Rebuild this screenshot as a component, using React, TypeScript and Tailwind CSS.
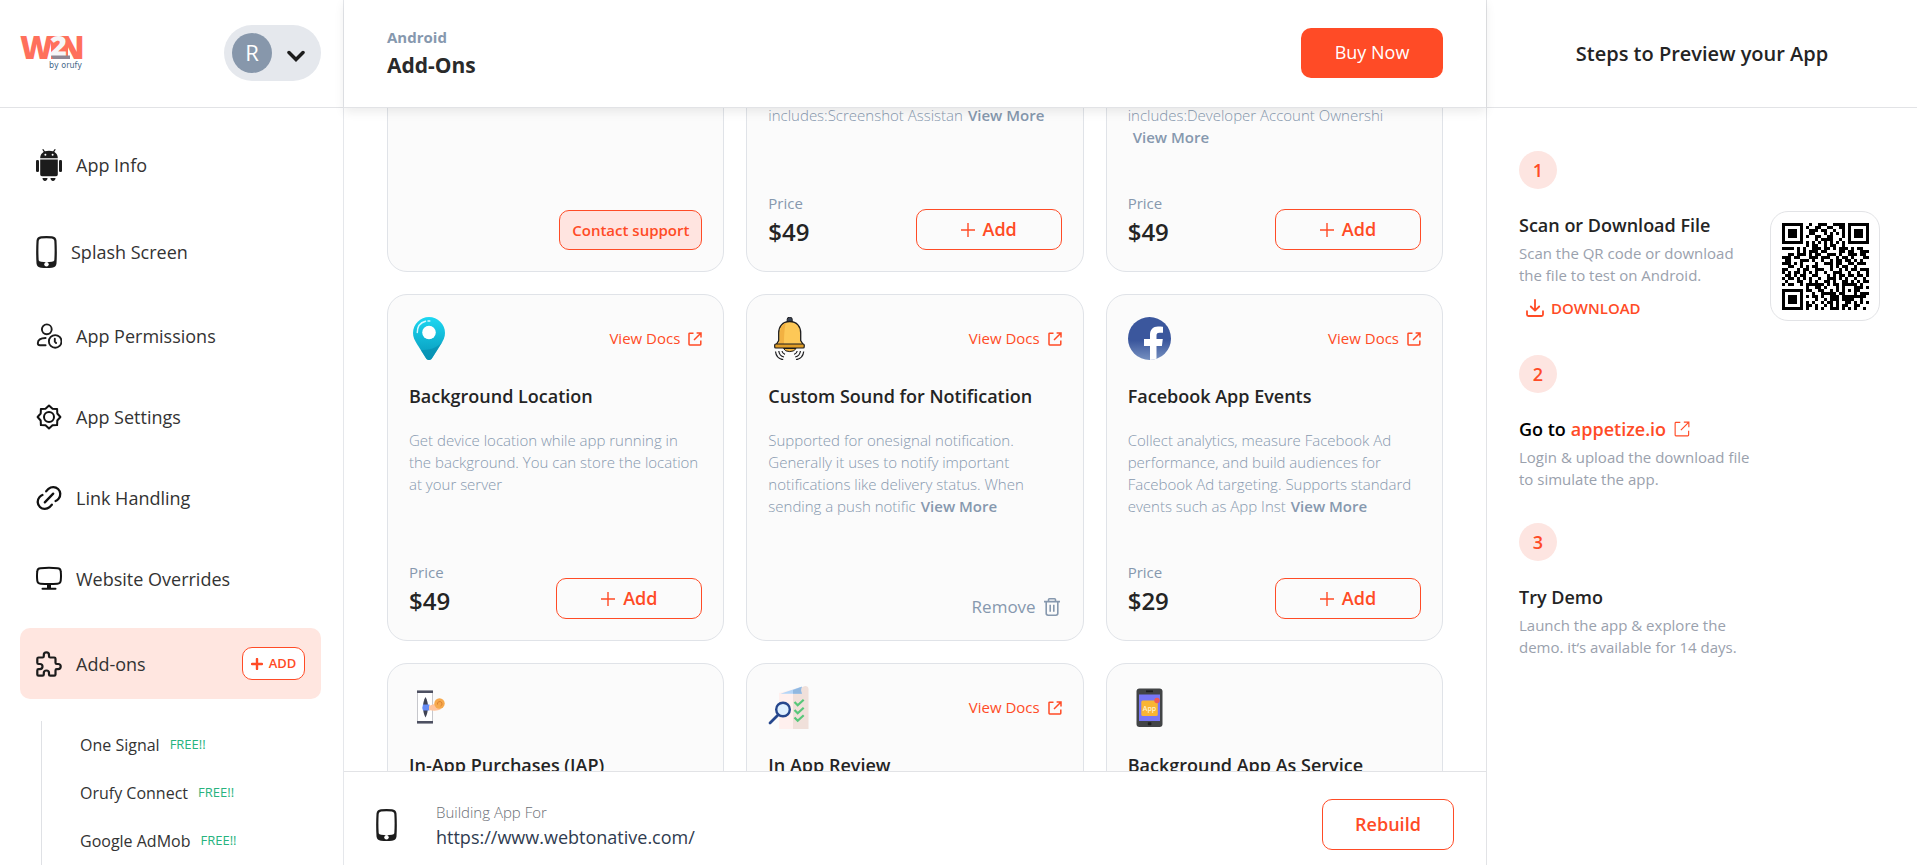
import { useLayoutEffect, useRef } from 'react';
import type { ReactNode } from 'react';

type NavItem = { label: string; icon: ReactNode };

type AddOn = {
  name: string;
  icon: ReactNode;
  docs?: boolean;
  text: string;
  more?: boolean;
  action: 'add' | 'remove' | 'contact';
  price?: string;
};

const AndroidIcon = () => (
  <svg width="26" height="32" viewBox="0 0 26 32" fill="#1c1c1c" aria-hidden="true">
    <path d="M4.2 9.2C4.2 5 7 1.8 13 1.8s8.800 3.200 8.800 7.400z" />
    <path d="M7 .7l1.800 2.600M19 .7l-1.800 2.600" stroke="#1c1c1c" strokeWidth="1.200" strokeLinecap="round" />
    <circle cx="9.400" cy="5.800" r="1" fill="#fff" />
    <circle cx="16.600" cy="5.800" r="1" fill="#fff" />
    <path d="M4.200 10.600h17.600v14.900a1.700 1.700 0 0 1-1.700 1.700H5.900a1.700 1.700 0 0 1-1.700-1.700z" />
    <rect x="0" y="11" width="3" height="12" rx="1.300" />
    <rect x="23" y="11" width="3" height="12" rx="1.300" />
    <path d="M6.500 29h5c0 1.600-1 2.900-2.500 2.900S6.500 30.600 6.500 29zM14.500 29h5c0 1.600-1 2.900-2.500 2.900s-2.500-1.300-2.500-2.900z" />
  </svg>
);

const PhoneIcon = () => (
  <svg width="21" height="32" viewBox="0 0 21 32" aria-hidden="true">
    <path
      fillRule="evenodd"
      fill="#1c1c1c"
      d="M5 .3Q10.500-.2 16 .3 20 .6 20.500 4.500 21.200 16 20.500 27.500 20 31.300 16 31.700 10.500 32.200 5 31.700 1 31.300.5 27.500-.2 16 .5 4.500 1 .6 5 .3zM5.200 2.500Q10.500 2 15.800 2.500 18 2.700 18.300 4.700 18.900 14 18.300 24.300 18 25.600 15.800 25.800 10.500 26.200 5.200 25.800 3 25.600 2.700 24.300 2.100 14 2.700 4.700 3 2.700 5.200 2.500z"
    />
    <circle cx="10.500" cy="28.300" r="2.200" fill="#fff" />
  </svg>
);

const UserClockIcon = () => (
  <svg width="26" height="26" viewBox="0 0 26 26" fill="none" stroke="#1c1c1c" strokeWidth="1.900" strokeLinecap="round" strokeLinejoin="round" aria-hidden="true">
    <circle cx="10.800" cy="6.300" r="4.900" />
    <path d="M9.600 15C4.500 15 1.800 17 1.800 20.200c0 1.500.8 2 2.200 2h5.600" />
    <circle cx="19.200" cy="18.400" r="6.300" />
    <path d="M18.800 15.800v2.900l1.300 1.300" />
  </svg>
);

const GearIcon = () => (
  <svg width="26" height="26" viewBox="0 0 26 26" fill="none" stroke="#111" strokeWidth="2" strokeLinejoin="round" aria-hidden="true">
    <path d="M13 1.600 16.500 4.700 21.100 4.900 21.300 9.500 24.400 13 21.300 16.500 21.100 21.100 16.500 21.300 13 24.400 9.500 21.300 4.900 21.100 4.700 16.500 1.600 13 4.700 9.500 4.900 4.900 9.500 4.700z" />
    <circle cx="13" cy="13" r="5" />
  </svg>
);

const LinkIcon = () => (
  <svg width="26" height="26" viewBox="0 0 26 26" fill="none" stroke="#111" strokeWidth="2.300" strokeLinecap="round" aria-hidden="true">
    <path d="M10.200 6.300 12.500 3.800a7.100 7.100 0 0 1 10.200 9.800c-1 1.200-1.800 1.900-3.100 2.400" />
    <path d="M15.800 19.700l-2.300 2.500a7.100 7.100 0 0 1-10.200-9.800c1-1.200 1.800-1.900 3.100-2.400" />
    <path d="M8.800 17.400l8.400-8.800" />
  </svg>
);

const MonitorIcon = () => (
  <svg width="26" height="26" viewBox="0 0 26 26" fill="none" stroke="#111" strokeWidth="2" strokeLinecap="round" aria-hidden="true">
    <path d="M4.500 2.200Q13 1.500 21.500 2.200q3 .2 3.200 3Q25.300 10 24.700 14.800q-.2 2.700-3.200 2.900Q13 18.300 4.500 17.700q-3-.2-3.200-2.900Q.7 10 1.300 5.200q.2-2.800 3.200-3z" />
    <path d="M13 18v4" strokeWidth="4" strokeLinecap="butt" />
    <path d="M6.500 22.700h13" />
  </svg>
);

const PuzzleIcon = () => (
  <svg width="26" height="26" viewBox="2 2 20 20" fill="none" stroke="#1c1c1c" strokeWidth="1.700" strokeLinecap="round" strokeLinejoin="round" aria-hidden="true">
    <path d="M4 7h3a1 1 0 0 0 1-1v-1a2 2 0 0 1 4 0v1a1 1 0 0 0 1 1h3a1 1 0 0 1 1 1v3a1 1 0 0 0 1 1h1a2 2 0 0 1 0 4h-1a1 1 0 0 0-1 1v3a1 1 0 0 1-1 1h-3a1 1 0 0 1-1-1v-1a2 2 0 0 0-4 0v1a1 1 0 0 1-1 1h-3a1 1 0 0 1-1-1v-3a1 1 0 0 1 1-1h1a2 2 0 0 0 0-4h-1a1 1 0 0 1-1-1v-3a1 1 0 0 1 1-1" />
  </svg>
);

const ExternalIcon = ({ size = 14, thin = false }: { size?: number; thin?: boolean }) => (
  <svg width={size} height={size} viewBox="0 0 14 14" fill="none" stroke="#ff4b26" strokeWidth={thin ? 1 : 1.500} aria-hidden="true">
    <path d="M5.500 1.200H1.700a.7.7 0 0 0-.7.700v10.400c0 .4.300.7.700.7h10.400c.4 0 .7-.3.700-.7V8.500" />
    <path d="M8.600 1H13v4.400M13 1 6 8" />
  </svg>
);

const PlusIcon = () => (
  <svg width="14" height="14" viewBox="0 0 14 14" stroke="#ff4b26" strokeWidth="1.400" aria-hidden="true">
    <path d="M7 0v14M0 7h14" />
  </svg>
);

const TrashIcon = () => (
  <svg width="16" height="18" viewBox="0 0 16 18" fill="none" stroke="#8698ae" strokeWidth="1.600" aria-hidden="true">
    <path d="M2.200 3.800v11.500c0 1.100.8 1.900 1.900 1.900h7.800c1.100 0 1.900-.8 1.900-1.900V3.800" />
    <path d="M0 3.600h16M4.500 3.400V1.800c0-.6.400-1 1-1h5c.6 0 1 .4 1 1v1.600M6.200 6.800v7M9.800 6.800v7" />
  </svg>
);

const PinArt = () => (
  <svg width="43" height="43" viewBox="0 0 43 43" aria-hidden="true">
    <defs>
      <linearGradient id="pin" x1="0" y1="0" x2="0" y2="1">
        <stop offset="0" stopColor="#1cd8f2" />
        <stop offset="1" stopColor="#0797b9" />
      </linearGradient>
    </defs>
    <path d="M20 0C11.400 0 4 7.100 4 16c0 4 1.500 7 3.800 10.800l9.200 14.500c1.500 2.300 4.500 2.300 6 0l9.200-14.500C34.500 23 36 20 36 16 36 7.100 28.600 0 20 0z" fill="url(#pin)" />
    <path d="M33.600 24.500C28 31.500 20 33 12 33.300l5 8c1.500 2.300 4.500 2.300 6 0l9.200-14.500z" fill="#078fb0" opacity=".7" />
    <circle cx="20" cy="15.500" r="6.800" fill="#fff" />
    <path d="M8.300 15.500C8.300 9 12 5.500 16.500 4.300M19 4h1.800" fill="none" stroke="#d5f8ff" strokeWidth="1.500" strokeLinecap="round" />
  </svg>
);

const BellArt = () => (
  <svg width="43" height="43" viewBox="0 0 43 43" aria-hidden="true">
    <rect x="19.200" y=".3" width="5" height="6" rx="2" fill="#3b4456" stroke="#1d1d1f" />
    <path d="M15.500 31.500a6.500 4.300 0 0 0 12.500 0z" fill="#f2b544" stroke="#1d1d1f" />
    <path d="M21.700 4.500c-7.200 0-11 5-11 11.500v7.500L8 28h27.500l-2.800-4.500V16c0-6.500-3.800-11.500-11-11.500z" fill="#fdc857" stroke="#1d1d1f" strokeWidth="1.300" />
    <path d="M12 16c0-5 2.500-9 6-10.200-1.500 4-2 14-2 21.500h-5.500l1.500-4z" fill="#f2b142" />
    <rect x="6.700" y="27" width="29.500" height="4" rx="1" fill="#e09d26" stroke="#1d1d1f" strokeWidth="1.200" />
    <path d="M7.500 34.500c.5 4.500 3.200 7.500 7.700 8.200M10.800 34c.3 3 2 5.300 5.200 6M14 34c.3 1.700 1.200 2.800 3 3.300M35.700 34.500c-.5 4.500-3.200 7.500-7.700 8.200M32.400 34c-.3 3-2 5.300-5.200 6M29.200 34c-.3 1.700-1.200 2.800-3 3.300" fill="none" stroke="#1d1d1f" strokeWidth="1.200" />
  </svg>
);

const FacebookArt = () => (
  <svg width="43" height="43" viewBox="0 0 43 43" aria-hidden="true">
    <defs>
      <linearGradient id="fb" x1="0" y1="0" x2="0" y2="1">
        <stop offset=".55" stopColor="#3b579d" />
        <stop offset="1" stopColor="#7690c0" />
      </linearGradient>
      <clipPath id="fbClip">
        <circle cx="21.500" cy="21.500" r="21.500" />
      </clipPath>
    </defs>
    <g clipPath="url(#fbClip)">
      <rect width="43" height="43" fill="url(#fb)" />
      <path d="M22 43V29h-6v-7h6v-4c0-5.500 3-8.500 8-8.500 2 0 4 .1 5 .3v6h-3.500c-2.500 0-3 1.200-3 3V22h6.300l-.9 7h-5.400v14z" fill="#fff" />
    </g>
  </svg>
);

const PurchaseArt = () => (
  <svg width="43" height="43" viewBox="0 0 43 43" aria-hidden="true">
    <rect x="8.500" y="5" width="15" height="32" fill="#fff" stroke="#b9bac0" strokeWidth=".8" />
    <path d="M8 4.500h16V7H8zM8 35h16v2.500H8z" fill="#4d5061" />
    <path d="M16.500 11c1.700 3 2.500 6 2.500 10s-.8 7-2.500 10.500C14.800 28 14 25 14 21s.8-7 2.500-10z" fill="#3f4354" />
    <path d="M14 18.500h6.500v6H14q-1.300-3 0-6z" fill="#678cf4" />
    <path d="M20 20c3-1.500 6-2.500 9-2.500l3 5.500c-3 2-7.500 2-12 1z" fill="#ffc49d" />
    <circle cx="30.500" cy="17.500" r="5.200" fill="#f6a94d" />
    <path d="M28.500 18.500a2.300 2.300 0 1 1 3 1.500" fill="none" stroke="#dd8232" />
  </svg>
);

const ReviewArt = () => (
  <svg width="43" height="43" viewBox="0 0 43 43" aria-hidden="true">
    <path d="M11 7 33 1v42H11z" fill="#fff0ee" />
    <path d="M25 4.500 36.500.2c2-.5 4 .8 4 3V43H25z" fill="#f0e0da" />
    <path d="M12.500 7.700 34 .5c-1.500 2.500-1 5 0 7.200z" fill="#b4d5f7" />
    <path d="M25 4 34 .8c-1.500 2.500-1 5 0 6.900h-9z" fill="#91b8e0" />
    <path d="m26.500 16 3.200 3.300 6-5.500M26.500 24l3.200 3.300 6-5.500M26.500 31.500l3.200 3.300 6-5.500" fill="none" stroke="#58c77a" strokeWidth="2.200" />
    <circle cx="15" cy="23.500" r="6.800" fill="#dff0ff" stroke="#26478d" strokeWidth="2.400" />
    <path d="M10 29 2 37" stroke="#26478d" strokeWidth="2.800" strokeLinecap="round" />
  </svg>
);

const ServiceArt = () => (
  <svg width="43" height="43" viewBox="0 0 43 43" aria-hidden="true">
    <rect x="8.500" y="2.500" width="26" height="38.500" rx="3" fill="#424446" />
    <rect x="11" y="8.500" width="21" height="26.500" fill="#7776f5" />
    <path d="M18 5.300h7" stroke="#1f2021" strokeWidth="1.800" />
    <rect x="19.800" y="36.300" width="3.600" height="3" rx=".7" fill="#1f2021" />
    <rect x="13.300" y="14.500" width="16.500" height="15.500" rx="1.500" fill="#f9b534" />
    <circle cx="29" cy="14.500" r="2.700" fill="#f05a55" />
    <text x="21.500" y="24.700" textAnchor="middle" fontSize="7" fontWeight="600" fill="#fff3d0">App</text>
  </svg>
);

const LogoArt = () => (
  <svg width="64" height="36" viewBox="0 0 64 36" className="overflow-visible" role="img" aria-label="W2N by orufy">
    <g fontFamily="'Open Sans', sans-serif" fontWeight="800" fill="#ff705c">
      <text x="0" y="24" fontSize="32">W</text>
      <text x="38" y="24" fontSize="32">N</text>
      <path d="M31 1h17v23H31z" />
      <text x="30" y="21" fontSize="29" fill="#f6f6f8">2</text>
    </g>
    <path d="M31 20.500h19v3.500H33z" fill="#8e8793" />
    <text x="29" y="33" fontSize="8" fontFamily="'DejaVu Sans', sans-serif" fill="#46688a">by orufy</text>
  </svg>
);

const qrRows = [
  '#######..#..###..####.#######',
  '#.....#.#..##..##..##.#.....#',
  '#.###.#..###.##..#..#.#.###.#',
  '#.###.#..##...#.#.#.#.#.###.#',
  '#.###.#.#..##..##...#.#.###.#',
  '#.....#....#.####..#..#.....#',
  '#######.#.#.#.#.#.#.#.#######',
  '........#.##..#.##..#........',
  '####.#.#..###.##.#.###.#.##..',
  '.....#.#.###.##....##.##..###',
  '..##.###.#.##..###.#..###.##.',
  '###.##...###.###..#.##.#...##',
  '.##...###.#..#..#.##.##.#.#..',
  '###.#.#....#..###.##..##.###.',
  '..##..#.#.##....#.#.##..#....',
  '##...#.##..###..#..#.#.##.###',
  '#.#.##.#.#.#..#..###..#..#..#',
  '.##.#.##..##...#.#.##.##.##.#',
  '#.##.#.#.#..#..###.#.#..#..#.',
  '.#...##..#.#..##.#..##.#.#.##',
  '#.##..#.######.#.##.#####.#..',
  '........#..##.#...#.#...###.#',
  '#######.##..##..#.#.#.#.##...',
  '#.....#...#..#####.##...#.###',
  '#.###.#.#.##.#..###.########.',
  '#.###.#....#..#.###.####..#..',
  '#.###.#.#.#..#.##.#..##.#.#.#',
  '#.....#.##.#..#.#.#.##..##...',
  '#######.#..#.#..###.#.#.#..#.',
];

const qrPath = qrRows
  .map((row, y) => [...row].map((cell, x) => (cell === '#' ? `M${x} ${y}h1v1h-1z` : '')).join(''))
  .join('');

const navItems: NavItem[] = [
  { label: 'App Info', icon: <AndroidIcon /> },
  { label: 'Splash Screen', icon: <PhoneIcon /> },
  { label: 'App Permissions', icon: <UserClockIcon /> },
  { label: 'App Settings', icon: <GearIcon /> },
  { label: 'Link Handling', icon: <LinkIcon /> },
  { label: 'Website Overrides', icon: <MonitorIcon /> },
];

const freeAddOns = ['One Signal', 'Orufy Connect', 'Google AdMob'];

const addOns: AddOn[] = [
  { name: 'Custom Feature', icon: <PurchaseArt />, text: 'Contact us to build it.', action: 'contact' },
  {
    name: 'Publish Assistance',
    icon: <ServiceArt />,
    text: 'Get help to publish your app on the store with our team of experts. This service includes:Screenshot Assistan',
    more: true,
    action: 'add',
    price: '$49',
  },
  {
    name: 'Account Setup',
    icon: <ServiceArt />,
    text: 'We help you open your developer account on the store. The account service also includes:Developer Account Ownershi',
    more: true,
    action: 'add',
    price: '$49',
  },
  {
    name: 'Background Location',
    icon: <PinArt />,
    docs: true,
    text: 'Get device location while app running in the background. You can store the location at your server',
    action: 'add',
    price: '$49',
  },
  {
    name: 'Custom Sound for Notification',
    icon: <BellArt />,
    docs: true,
    text: 'Supported for onesignal notification. Generally it uses to notify important notifications like delivery status. When sending a push notific',
    more: true,
    action: 'remove',
  },
  {
    name: 'Facebook App Events',
    icon: <FacebookArt />,
    docs: true,
    text: 'Collect analytics, measure Facebook Ad performance, and build audiences for Facebook Ad targeting. Supports standard events such as App Inst',
    more: true,
    action: 'add',
    price: '$29',
  },
  { name: 'In-App Purchases (IAP)', icon: <PurchaseArt />, text: '', action: 'add', price: '$49' },
  { name: 'In App Review', icon: <ReviewArt />, docs: true, text: '', action: 'add', price: '$49' },
  { name: 'Background App As Service', icon: <ServiceArt />, text: '', action: 'add', price: '$49' },
];

const Sidebar = () => (
  <aside className="flex w-[344px] shrink-0 flex-col border-r border-[#e5e7eb] bg-white">
    <div className="flex h-[108px] shrink-0 items-center justify-between border-b border-[#e2e3e6] pr-[22px] pb-0.5 pl-5">
      <LogoArt />
      <button type="button" aria-label="Account" className="flex h-14 w-[97px] items-center justify-between rounded-full bg-[#e5e8ed] pr-4 pl-2">
        <span className="flex h-10 w-10 items-center justify-center rounded-full bg-[#8797ab] text-[22px] text-white">R</span>
        <svg width="18" height="18" viewBox="0 0 18 18" fill="none" stroke="#1c1c1c" strokeWidth="3.500" strokeLinecap="round" aria-hidden="true">
          <path d="M2 8.500l7 7 7-7" />
        </svg>
      </button>
    </div>
    <nav className="flex min-h-0 flex-1 flex-col gap-[17px] overflow-hidden pt-[22px] pr-[22px] pl-5">
      {navItems.map((item) => (
        <a key={item.label} href="#" className="flex shrink-0 items-center gap-3.5 px-4 py-[19px] text-[18px] leading-[26px] text-[#333]">
          {item.icon}
          {item.label}
        </a>
      ))}
      <div className="flex shrink-0 items-center justify-between rounded-[10px] bg-[#ffe6e0] py-[19px] pr-4 pl-4">
        <a href="#" className="flex items-center gap-3.5 text-[18px] leading-[26px] text-[#333]">
          <PuzzleIcon />
          Add-ons
        </a>
        <button type="button" className="flex h-[33px] w-[63px] items-center justify-center gap-1.5 rounded-[10px] border border-[#ff4b26] bg-white text-[13px] font-semibold text-[#ff4b26]">
          <svg width="12" height="12" viewBox="0 0 12 12" stroke="#ff4b26" strokeWidth="2.400" strokeLinecap="round" aria-hidden="true">
            <path d="M6 1v10M1 6h10" />
          </svg>
          ADD
        </button>
      </div>
      <ul className="mt-[5px] ml-[21px] shrink-0 border-l border-[#dfe1e5] pl-[38px]">
        {freeAddOns.map((name) => (
          <li key={name} className="flex h-12 items-center">
            <a href="#" className="flex items-center gap-2.5 text-[16px] text-[#333]">
              {name}
              <span className="text-[13px] text-[#27b37e]">FREE!!</span>
            </a>
          </li>
        ))}
      </ul>
    </nav>
  </aside>
);

const CardAction = ({ item }: { item: AddOn }) => {
  if (item.action === 'contact') {
    return (
      <button type="button" className="ml-auto h-10 w-[143px] rounded-[10px] border border-[#ff4b26] bg-[#ffe4e0] text-[15px] font-semibold text-[#ff4b26]">
        Contact support
      </button>
    );
  }
  if (item.action === 'remove') {
    return (
      <button type="button" className="mr-0.5 ml-auto flex items-center gap-2 text-[17px] leading-6 text-[#8698ae]">
        Remove
        <TrashIcon />
      </button>
    );
  }
  return (
    <>
      <div className="text-[#8698ae]">
        <p className="text-[15px] leading-[22px]">Price</p>
        <p className="text-[24px] leading-9 font-semibold text-[#242424]">{item.price}</p>
      </div>
      <button type="button" className="flex h-[41px] w-[146px] items-center justify-center gap-2 rounded-[10px] border border-[#ff4b26] text-[18px] font-semibold text-[#ff4b26]">
        <PlusIcon />
        Add
      </button>
    </>
  );
};

const AddOnCard = ({ item }: { item: AddOn }) => (
  <article className="flex h-[347px] flex-col rounded-[20px] border border-[#e0e3e8] bg-[#fbfbfb] px-[21px] pt-[22px] pb-[21px]">
    <div className="flex items-center justify-between">
      {item.icon}
      {item.docs && (
        <a href="#" className="flex items-center gap-2 text-[15px] text-[#ff4b26]">
          View Docs
          <ExternalIcon />
        </a>
      )}
    </div>
    <h2 className="mt-6 text-[18px] leading-6 font-semibold whitespace-nowrap text-[#242424]">{item.name}</h2>
    <p className="mt-[21px] text-[15px] leading-[22px] font-light text-[#8698ae]">
      {item.text}
      {item.more && (
        <button type="button" className="ml-[5px] font-semibold">
          View More
        </button>
      )}
    </p>
    <div className="mt-auto flex items-end justify-between">
      <CardAction item={item} />
    </div>
  </article>
);

const Main = () => {
  const listRef = useRef<HTMLDivElement>(null);

  useLayoutEffect(() => {
    if (listRef.current) listRef.current.scrollTop = 207;
  }, []);

  return (
    <main className="flex min-w-0 flex-1 flex-col bg-white">
      <header className="z-10 flex h-[108px] shrink-0 items-center justify-between border-b border-[#e2e3e6] bg-white px-[43px] pb-0.5 shadow-[0_4px_10px_rgba(0,0,0,0.08)]">
        <div>
          <p className="text-[15px] leading-6 font-bold text-[#8698ae]">Android</p>
          <h1 className="text-[21px] leading-8 font-bold text-[#2a2a2a]">Add-Ons</h1>
        </div>
        <button type="button" className="h-[50px] w-[142px] rounded-[10px] bg-[#ff4b26] text-[18px] text-white">
          Buy Now
        </button>
      </header>
      <div ref={listRef} className="min-h-0 flex-1 overflow-y-auto px-[43px] py-6 [scrollbar-width:none]">
        <div className="grid grid-cols-3 gap-[22px]">
          {addOns.map((item) => (
            <AddOnCard key={item.name} item={item} />
          ))}
        </div>
      </div>
      <footer className="flex shrink-0 items-center justify-between border-t border-[#e2e3e6] px-8 pt-[27px] pb-[15px]">
        <div className="flex items-center gap-[39px]">
          <PhoneIcon />
          <div>
            <p className="text-[15px] leading-6 font-light text-[#6b6f76]">Building App For</p>
            <p className="text-[18px] leading-[26px] text-[#2f3b4f]">https://www.webtonative.com/</p>
          </div>
        </div>
        <button type="button" className="h-[51px] w-[132px] rounded-[10px] border border-[#ff4b26] text-[18px] font-semibold text-[#ff4b26]">
          Rebuild
        </button>
      </footer>
    </main>
  );
};

const StepNumber = ({ value }: { value: number }) => (
  <span className="mb-[22px] flex h-[38px] w-[38px] items-center justify-center rounded-full bg-[#fde5e1] text-[18px] font-semibold text-[#ff4b26]">
    {value}
  </span>
);

const PreviewPanel = () => (
  <aside className="flex w-[431px] shrink-0 flex-col border-l border-[#e2e3e6] bg-white">
    <div className="flex h-[108px] shrink-0 items-center justify-center border-b border-[#e2e3e6]">
      <h2 className="text-[20px] font-semibold text-[#242424]">Steps to Preview your App</h2>
    </div>
    <ol className="flex flex-col gap-[33px] px-8 pt-[43px] text-[15px] leading-[22px] text-[#9aa1ad]">
      <li>
        <StepNumber value={1} />
        <div className="flex items-start justify-between pr-[5px]">
          <div>
            <h3 className="text-[18px] leading-7 font-semibold text-[#242424]">Scan or Download File</h3>
            <p className="mt-[3px]">
              Scan the QR code or download
              <br />
              the file to test on Android.
            </p>
            <button type="button" className="mt-2 flex h-7 items-center gap-[7px] pl-[7px] text-[15px] font-semibold text-[#ff4b26]">
              <svg width="18" height="18" viewBox="0 0 18 18" fill="none" stroke="#ff4b26" strokeWidth="1.800" strokeLinecap="round" strokeLinejoin="round" aria-hidden="true">
                <path d="M9 1v10.500M4.800 7.500 9 11.700l4.200-4.200M1 12.200v3.300c0 .9.600 1.500 1.500 1.500h13c.9 0 1.500-.6 1.500-1.500v-3.300" />
              </svg>
              DOWNLOAD
            </button>
          </div>
          <div className="flex h-[110px] w-[110px] items-center justify-center rounded-[18px] border border-[#e2e3e6]">
            <svg width="87" height="87" viewBox="0 0 29 29" shapeRendering="crispEdges" role="img" aria-label="QR code">
              <path d={qrPath} fill="#000" />
            </svg>
          </div>
        </div>
      </li>
      <li>
        <StepNumber value={2} />
        <h3 className="flex items-center gap-[5px] text-[18px] leading-7 font-semibold text-black">
          Go to
          <a href="#" className="flex items-center gap-2 text-[#ff4b26]">
            appetize.io
            <ExternalIcon size={16} thin />
          </a>
        </h3>
        <p className="mt-[3px]">
          Login &amp; upload the download file
          <br />
          to simulate the app.
        </p>
      </li>
      <li>
        <StepNumber value={3} />
        <h3 className="text-[18px] leading-7 font-semibold text-[#242424]">Try Demo</h3>
        <p className="mt-[3px]">
          Launch the app &amp; explore the
          <br />
          demo. it‘s available for 14 days.
        </p>
      </li>
    </ol>
  </aside>
);

export default function App() {
  return (
    <div className="flex h-screen overflow-hidden bg-white font-['Open_Sans','Noto_Sans',sans-serif]">
      <Sidebar />
      <Main />
      <PreviewPanel />
    </div>
  );
}
